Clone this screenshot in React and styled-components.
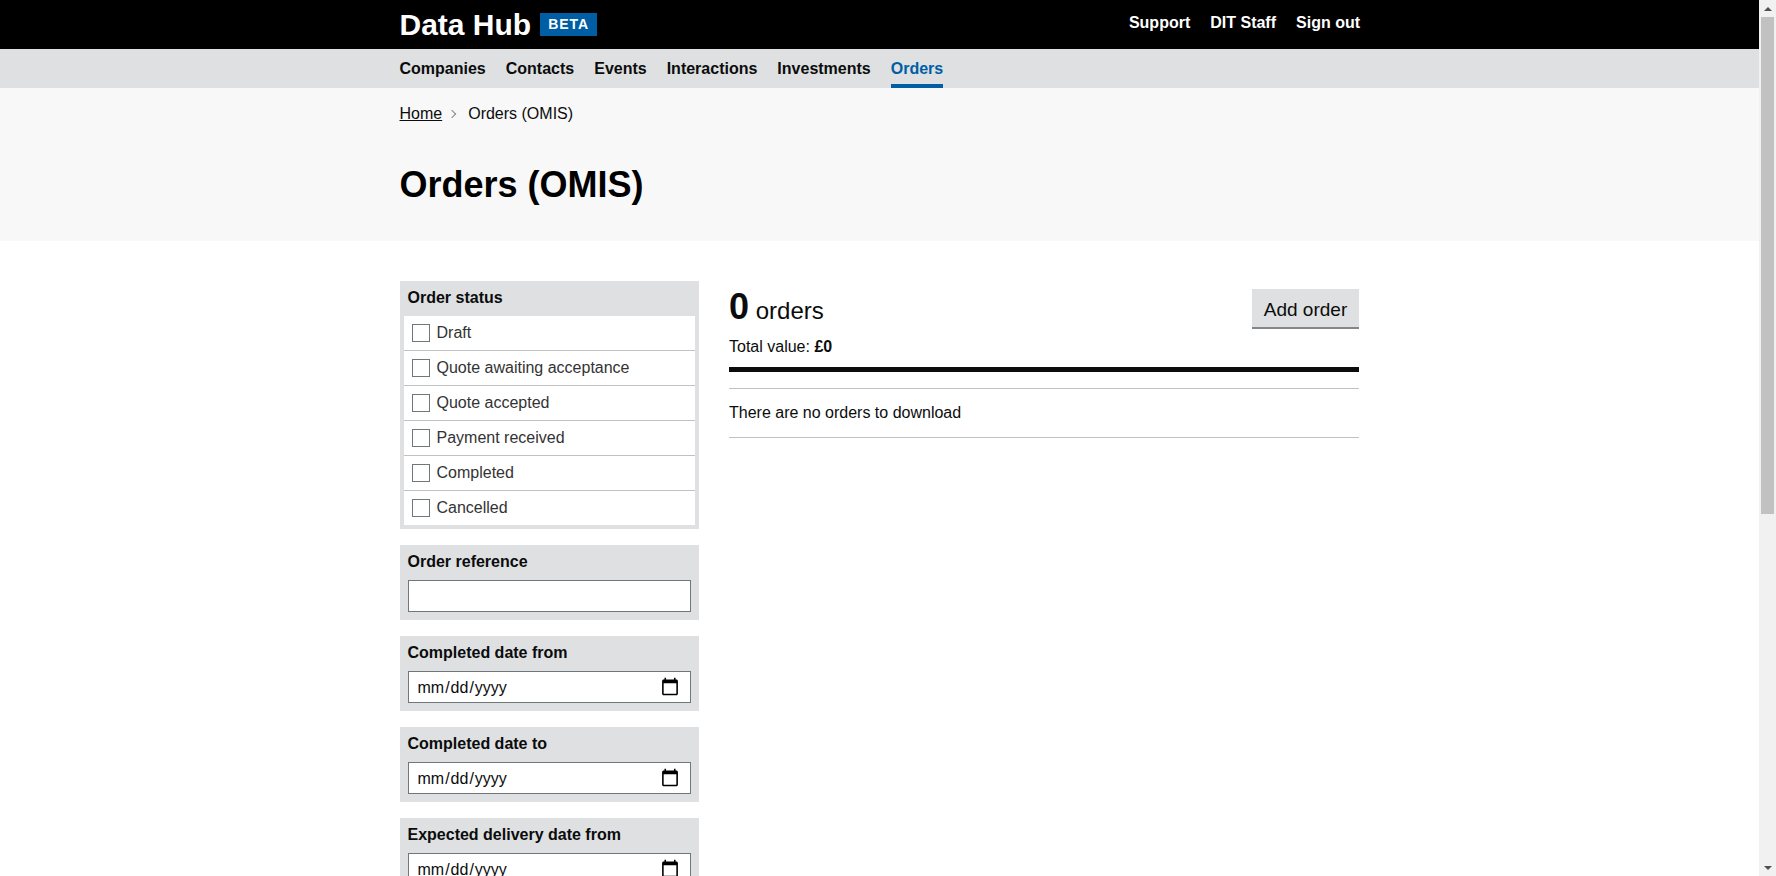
import styled, { createGlobalStyle } from "styled-components";

const GlobalStyle = createGlobalStyle`
  * {
    box-sizing: border-box;
  }
  body {
    margin: 0;
    padding-right: 17px;
    background: #fff;
    color: #0b0c0c;
    font-family: "Liberation Sans", Arial, sans-serif;
    font-size: 16px;
  }
`;

const STATUSES = [
  "Draft",
  "Quote awaiting acceptance",
  "Quote accepted",
  "Payment received",
  "Completed",
  "Cancelled",
];

const FILTERS = [
  { label: "Order reference", type: "text" },
  { label: "Completed date from", type: "date" },
  { label: "Completed date to", type: "date" },
  { label: "Expected delivery date from", type: "date" },
  { label: "Expected delivery date to", type: "date" },
  { label: "Company name", type: "text" },
  { label: "Contact name", type: "text" },
  { label: "Sector", type: "text" },
  { label: "UK region", type: "text" },
];

const App = () => {
  return (
    <>
      <GlobalStyle />
      <TopBar>
        <Wrap>
          <TopRow>
            <Brand>
              <Logo>Data Hub</Logo>
              <Badge>BETA</Badge>
            </Brand>
            <TopLinks>
              <a>Support</a>
              <a>DIT Staff</a>
              <a>Sign out</a>
            </TopLinks>
          </TopRow>
        </Wrap>
      </TopBar>
      <NavBar>
        <Wrap>
          <NavList>
            <NavItem>Companies</NavItem>
            <NavItem>Contacts</NavItem>
            <NavItem>Events</NavItem>
            <NavItem>Interactions</NavItem>
            <NavItem>Investments</NavItem>
            <NavItem $active>Orders</NavItem>
          </NavList>
        </Wrap>
      </NavBar>
      <Hero>
        <Wrap>
          <Breadcrumb>
            <a>Home</a>
            <Chevron />
            <span>Orders (OMIS)</span>
          </Breadcrumb>
          <Title>Orders (OMIS)</Title>
        </Wrap>
      </Hero>
      <Wrap>
        <Columns>
          <Sidebar>
            <FilterBox>
              <StatusLabel>Order status</StatusLabel>
              <OptionList>
                {STATUSES.map((status) => (
                  <Option key={status}>
                    <Tick />
                    {status}
                  </Option>
                ))}
              </OptionList>
            </FilterBox>
            {FILTERS.map((filter) => (
              <FilterBox key={filter.label} $padded>
                <FilterLabel>{filter.label}</FilterLabel>
                <Field type={filter.type} />
              </FilterBox>
            ))}
          </Sidebar>
          <Main>
            <ResultHead>
              <div>
                <Count>
                  <strong>0</strong> orders
                </Count>
                <Total>
                  Total value: <strong>£0</strong>
                </Total>
              </div>
              <AddButton>Add order</AddButton>
            </ResultHead>
            <EmptyNote>There are no orders to download</EmptyNote>
          </Main>
        </Columns>
      </Wrap>
      <ScrollBar>
        <ScrollArrow />
        <ScrollTrack>
          <ScrollThumb />
        </ScrollTrack>
        <ScrollArrow $down />
      </ScrollBar>
    </>
  );
};

const Wrap = styled.div`
  width: 960px;
  margin: 0 auto;
`;

const TopBar = styled.header`
  background: #000;
  height: 49px;
`;

const TopRow = styled.div`
  display: flex;
  align-items: center;
  justify-content: space-between;
  height: 49px;
`;

const Brand = styled.div`
  display: flex;
  align-items: center;
`;

const Logo = styled.div`
  color: #fff;
  font-size: 30px;
  font-weight: bold;
  line-height: 49px;
`;

const Badge = styled.span`
  display: block;
  margin-left: 9px;
  width: 57px;
  height: 23px;
  background: #005ea5;
  color: #fff;
  font-size: 14px;
  font-weight: bold;
  letter-spacing: 1px;
  line-height: 23px;
  text-align: center;
`;

const TopLinks = styled.nav`
  display: flex;
  gap: 20px;
  margin-right: -0.5px;
  a {
    color: #fff;
    font-weight: bold;
    line-height: 18px;
    padding-bottom: 4px;
  }
`;

const NavBar = styled.nav`
  background: #dee0e2;
  height: 39px;
`;

const NavList = styled.div`
  display: flex;
  gap: 20px;
`;

const NavItem = styled.a`
  display: block;
  height: 39px;
  padding-top: 11px;
  line-height: 18px;
  font-weight: bold;
  color: ${(p) => (p.$active ? "#005ea5" : "#0b0c0c")};
  border-bottom: 4px solid ${(p) => (p.$active ? "#005ea5" : "transparent")};
`;

const Hero = styled.div`
  background: #f8f8f8;
  height: 153px;
  padding-top: 17px;
`;

const Breadcrumb = styled.div`
  display: flex;
  align-items: center;
  line-height: 18px;
  a {
    text-decoration: underline;
  }
`;

const Chevron = styled.i`
  width: 6px;
  height: 6px;
  margin: 0 13px 0 7px;
  border: solid #888;
  border-width: 1px 1px 0 0;
  transform: rotate(45deg);
`;

const Title = styled.h1`
  margin: 42px 0 0;
  font-size: 36px;
  line-height: 40px;
  font-weight: bold;
  color: #000;
`;

const Columns = styled.div`
  display: flex;
  justify-content: space-between;
  padding: 40px 0 30px;
`;

const Sidebar = styled.aside`
  display: flex;
  flex-direction: column;
  gap: 16px;
  width: 299.5px;
`;

const FilterBox = styled.section`
  background: #dee0e2;
  padding: ${(p) => (p.$padded ? "0 8px 8px" : "0 4px 4px")};
`;

const FilterLabel = styled.div`
  font-weight: bold;
  line-height: 18px;
  padding: 8px 0 9px;
`;

const StatusLabel = styled(FilterLabel)`
  padding-left: 4px;
`;

const OptionList = styled.div`
  background: #fff;
`;

const Option = styled.label`
  display: flex;
  align-items: center;
  gap: 7px;
  height: 35px;
  padding: 0 8px;
  color: #333;
  line-height: 18px;
  border-bottom: 1px solid #bfc1c3;
  &:last-child {
    height: 34px;
    border-bottom: 0;
  }
`;

const Tick = styled.span`
  width: 18px;
  height: 18px;
  background: #fff;
  border: 1px solid #6f777b;
`;

const Field = styled.input`
  display: block;
  width: 100%;
  height: 32px;
  padding: 2px 8px 0;
  background: #fff;
  border: 1px solid #6f777b;
  border-radius: 0;
  font-family: inherit;
  font-size: 16px;
  color: #0b0c0c;
  &::-webkit-calendar-picker-indicator {
    width: 20px;
    height: 20px;
    padding: 0;
    margin: -2px 2px 0 0;
  }
`;

const Main = styled.main`
  width: 630px;
  margin-right: 0.5px;
`;

const ResultHead = styled.div`
  display: flex;
  align-items: flex-start;
  justify-content: space-between;
  padding-top: 8px;
  height: 91px;
  border-bottom: 5px solid #0b0c0c;
`;

const Count = styled.div`
  font-size: 24px;
  line-height: 36px;
  strong {
    font-size: 36px;
  }
`;

const Total = styled.div`
  margin-top: 8px;
  line-height: 20px;
  strong {
    font-weight: bold;
  }
`;

const AddButton = styled.button`
  width: 107px;
  height: 40px;
  padding: 3px 0 0;
  background: #dee0e2;
  border: 0;
  border-bottom: 2px solid #858688;
  font-family: inherit;
  font-size: 19px;
  color: #0b0c0c;
`;

const EmptyNote = styled.p`
  margin: 16px 0 0;
  height: 50px;
  line-height: 47px;
  border-top: 1px solid #bfc1c3;
  border-bottom: 1px solid #bfc1c3;
`;

const ScrollBar = styled.div`
  position: fixed;
  top: 0;
  right: 0;
  bottom: 0;
  width: 17px;
  display: flex;
  flex-direction: column;
  background: #f1f1f1;
`;

const ScrollArrow = styled.div`
  flex: none;
  height: 17px;
  display: flex;
  align-items: center;
  justify-content: center;
  &::before {
    content: "";
    border-left: 4px solid transparent;
    border-right: 4px solid transparent;
    border-${(p) => (p.$down ? "top" : "bottom")}: 4px solid #505050;
  }
`;

const ScrollTrack = styled.div`
  flex: 1;
  padding: 0 2px;
`;

const ScrollThumb = styled.div`
  height: 497px;
  background: #c1c1c1;
`;

export default App;
